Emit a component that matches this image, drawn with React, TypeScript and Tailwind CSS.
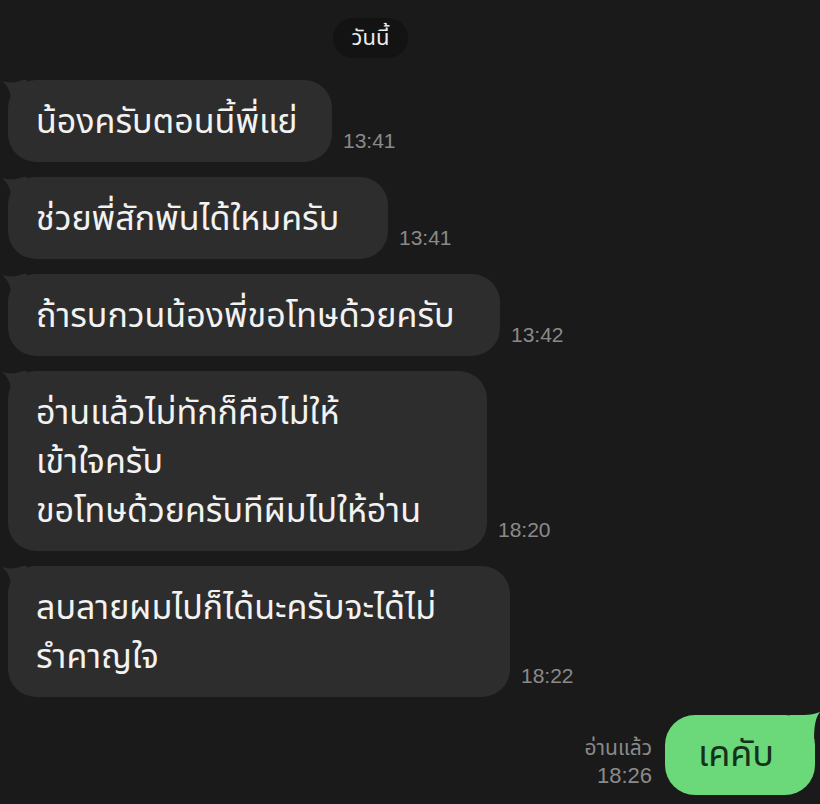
import type { ReactNode } from "react"

const thai = "font-['Noto_Sans_Thai','Noto_Sans','DejaVu_Sans',sans-serif]"

type Msg = {
  lines: string[]
  time: string
  width: string
}

const messages: Msg[] = [
  { lines: ["น้องครับตอนนี้พี่แย่"], time: "13:41", width: "w-[324px]" },
  { lines: ["ช่วยพี่สักพันได้ใหมครับ"], time: "13:41", width: "w-[380px]" },
  { lines: ["ถ้ารบกวนน้องพี่ขอโทษด้วยครับ"], time: "13:42", width: "w-[492px]" },
  {
    lines: ["อ่านแล้วไม่ทักก็คือไม่ให้", "เข้าใจครับ", "ขอโทษด้วยครับทีผิมไปให้อ่าน"],
    time: "18:20",
    width: "w-[479px]",
  },
  {
    lines: ["ลบลายผมไปก็ได้นะครับจะได้ไม่", "รำคาญใจ"],
    time: "18:22",
    width: "w-[502px]",
  },
]

function Bubble({ children, width }: { children: ReactNode; width: string }) {
  return (
    <div className={`relative ${width} rounded-[28px] bg-[#2d2d2d] pl-7 pt-[18px] pb-[15px]`}>
      {/* tail */}
      <svg className="absolute -left-[7px] top-0" width="26" height="22" viewBox="0 0 26 22">
        <path d="M1 1 C8 3 14 3 22 0 L26 0 L26 22 L10 22 C10 12 7 6 1 1 Z" fill="#2d2d2d" />
      </svg>
      <div className={`relative text-[34px] leading-[49px] text-[#f2f2f2] whitespace-nowrap ${thai}`}>
        {children}
      </div>
    </div>
  )
}

export default function App() {
  return (
    <div className="w-[820px] h-[804px] overflow-hidden bg-[#1a1a1a] pl-2 pt-[18px]">
      {/* date */}
      <div className="ml-[325px] flex h-10 w-[75px] items-center justify-center rounded-full bg-[#131313]">
        <span className={`text-[22px] text-[#ededed] ${thai}`}>วันนี้</span>
      </div>

      <div className="mt-[22px] flex flex-col gap-[15px]">
        {messages.map((m, i) => (
          <div key={i} className="flex items-end gap-[11px]">
            <Bubble width={m.width}>
              {m.lines.map((l, j) => (
                <div key={j}>{l}</div>
              ))}
            </Bubble>
            <span className="mb-[6px] font-['Liberation_Sans',sans-serif] text-[21px] text-[#8a8a8a]">
              {m.time}
            </span>
          </div>
        ))}
      </div>

      {/* my reply */}
      <div className="mt-[18px] flex items-end justify-end gap-[13px] pr-[5px]">
        <div className="mb-[6px] flex flex-col items-end leading-[27px]">
          <span className={`text-[21px] text-[#8a8a8a] ${thai}`}>อ่านแล้ว</span>
          <span className="font-['Liberation_Sans',sans-serif] text-[22px] text-[#8a8a8a]">18:26</span>
        </div>
        <div className="relative flex h-20 w-[150px] items-center justify-center rounded-[30px] bg-[#6bd87a]">
          <svg className="absolute -right-[5px] -top-[3px]" width="30" height="28" viewBox="0 0 30 28">
            <path d="M0 3 L14 3 C20 3 25 2 30 0 C26 5 24 12 24 28 L0 28 Z" fill="#6bd87a" />
          </svg>
          <span className={`relative pr-2 text-[36px] text-[#15301b] ${thai}`}>เคคับ</span>
        </div>
      </div>
    </div>
  )
}
